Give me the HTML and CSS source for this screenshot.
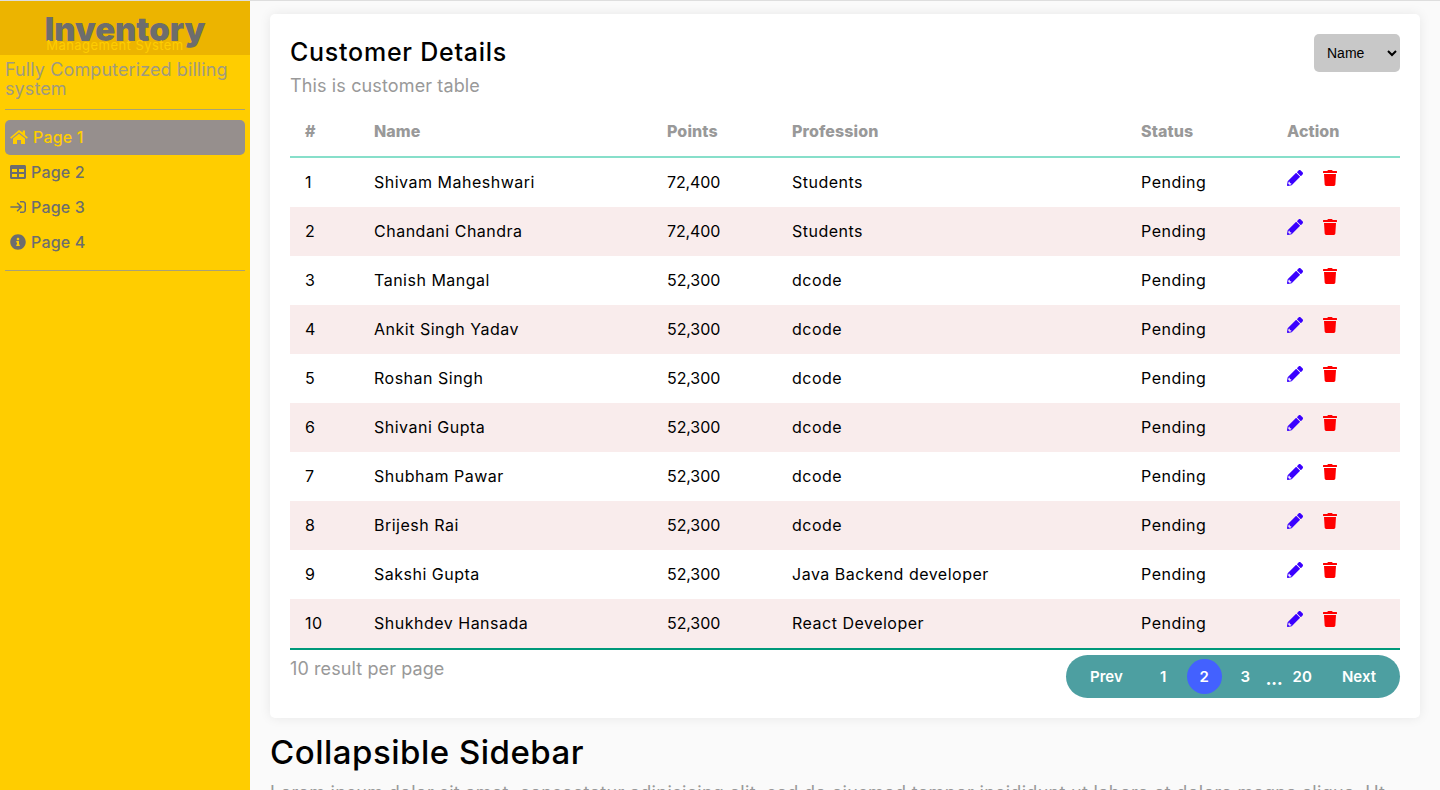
FILE: index.html
```html
<!DOCTYPE html>
<html lang="en">
<head>
    <meta charset="UTF-8">
    <meta name="viewport" content="width=device-width, initial-scale=1.0">
    <title>Inventory Management System</title>
    <link rel="stylesheet" href="styles.css">
</head>
<body>
    <!-- Icon set, used with <use> below -->
    <svg class="icon-defs" aria-hidden="true">
        <symbol id="i-home" viewBox="0 0 576 512"><path d="M288 32L3 270l33 38L288 100l252 208 33-38-93-78V44h-72v68zM96 306L288 148l192 158v174H352V352H224v128H96z"/></symbol>
        <symbol id="i-table" viewBox="0 0 512 512"><path d="M464 32H48C21.49 32 0 53.49 0 80v352c0 26.51 21.49 48 48 48h416c26.51 0 48-21.49 48-48V80c0-26.51-21.49-48-48-48zM224 416H64v-96h160v96zm0-160H64v-96h160v96zm224 160H288v-96h160v96zm0-160H288v-96h160v96z"/></symbol>
        <symbol id="i-signin" viewBox="0 0 512 512"><path d="M416 448h-84c-6.6 0-12-5.4-12-12v-24c0-6.6 5.4-12 12-12h84c26.5 0 48-21.5 48-48V160c0-26.5-21.500-48-48-48h-84c-6.600 0-12-5.400-12-12V76c0-6.600 5.400-12 12-12h84c53 0 96 43 96 96v192c0 53-43 96-96 96zM235 113l-17 17c-4.700 4.700-4.700 12.300 0 17l85 85H24c-6.600 0-12 5.400-12 12v24c0 6.600 5.400 12 12 12h279l-85 85c-4.700 4.700-4.700 12.300 0 17l17 17c4.700 4.700 12.300 4.700 17 0l134-134c4.700-4.700 4.700-12.300 0-17L252 113c-4.700-4.700-12.300-4.700-17 0z"/></symbol>
        <symbol id="i-info" viewBox="0 0 512 512"><path d="M256 8C119.043 8 8 119.083 8 256c0 136.997 111.043 248 248 248s248-111.003 248-248C504 119.083 392.957 8 256 8zm0 110c23.196 0 42 18.804 42 42s-18.804 42-42 42-42-18.804-42-42 18.804-42 42-42zm56 254c0 6.627-5.373 12-12 12h-88c-6.627 0-12-5.373-12-12v-24c0-6.627 5.373-12 12-12h12v-64h-12c-6.627 0-12-5.373-12-12v-24c0-6.627 5.373-12 12-12h64c6.627 0 12 5.373 12 12v100h12c6.627 0 12 5.373 12 12v24z"/></symbol>
        <symbol id="i-pencil" viewBox="0 0 512 512"><path d="M497.9 142.1l-46.1 46.1c-4.7 4.7-12.3 4.7-17 0l-111-111c-4.7-4.7-4.7-12.3 0-17l46.1-46.1c18.7-18.7 49.1-18.7 67.900 0l60.100 60.100c18.800 18.700 18.800 49.100 0 67.900zM284.200 99.800L21.600 362.400.4 483.900c-2.900 16.400 11.400 30.600 27.800 27.800l121.500-21.300 262.600-262.600c4.700-4.700 4.700-12.300 0-17l-111-111c-4.800-4.700-12.400-4.700-17.100 0zM88 424h48v36.300l-64.500 11.300-31.100-31.100L51.700 376H88v48z"/></symbol>
        <symbol id="i-trash" viewBox="0 0 448 512"><path d="M432 32H312l-9.400-18.700A24 24 0 0 0 281.100 0H166.800a23.720 23.720 0 0 0-21.400 13.300L136 32H16A16 16 0 0 0 0 48v32a16 16 0 0 0 16 16h416a16 16 0 0 0 16-16V48a16 16 0 0 0-16-16zM53.200 467a48 48 0 0 0 47.900 45h245.800a48 48 0 0 0 47.900-45L416 128H32z"/></symbol>
    </svg>

    <div class="app">
        <aside class="sidebar">
            <div class="sidebar-header">
                <h3 class="brand">Inventory</h3>
                <div class="brand-sub">Management System</div>
            </div>
            <p class="tagline">Fully Computerized billing system</p>
            <hr class="rule">
            <ul class="menu">
                <li class="menu-item active"><svg class="menu-icon wide"><use href="#i-home"/></svg>Page 1</li>
                <li class="menu-item"><svg class="menu-icon"><use href="#i-table"/></svg>Page 2</li>
                <li class="menu-item"><svg class="menu-icon"><use href="#i-signin"/></svg>Page 3</li>
                <li class="menu-item"><svg class="menu-icon"><use href="#i-info"/></svg>Page 4</li>
            </ul>
            <hr class="rule">
        </aside>

        <main class="content">
            <section class="card">
                <div class="card-head">
                    <div>
                        <h4 class="card-title">Customer Details</h4>
                        <p class="card-sub">This is customer table</p>
                    </div>
                    <select class="sort-select">
                        <option>Name</option>
                    </select>
                </div>

                <table class="customers">
                    <thead>
                        <tr>
                            <th class="col-id">#</th>
                            <th class="col-name">Name</th>
                            <th class="col-points">Points</th>
                            <th class="col-job">Profession</th>
                            <th class="col-status">Status</th>
                            <th class="col-action">Action</th>
                        </tr>
                    </thead>
                    <tbody>
                        <tr><td>1</td><td>Shivam Maheshwari</td><td class="num">72,400</td><td>Students</td><td>Pending</td><td><svg class="act edit"><use href="#i-pencil"/></svg><svg class="act del"><use href="#i-trash"/></svg></td></tr>
                        <tr><td>2</td><td>Chandani Chandra</td><td class="num">72,400</td><td>Students</td><td>Pending</td><td><svg class="act edit"><use href="#i-pencil"/></svg><svg class="act del"><use href="#i-trash"/></svg></td></tr>
                        <tr><td>3</td><td>Tanish Mangal</td><td class="num">52,300</td><td>dcode</td><td>Pending</td><td><svg class="act edit"><use href="#i-pencil"/></svg><svg class="act del"><use href="#i-trash"/></svg></td></tr>
                        <tr><td>4</td><td>Ankit Singh Yadav</td><td class="num">52,300</td><td>dcode</td><td>Pending</td><td><svg class="act edit"><use href="#i-pencil"/></svg><svg class="act del"><use href="#i-trash"/></svg></td></tr>
                        <tr><td>5</td><td>Roshan Singh</td><td class="num">52,300</td><td>dcode</td><td>Pending</td><td><svg class="act edit"><use href="#i-pencil"/></svg><svg class="act del"><use href="#i-trash"/></svg></td></tr>
                        <tr><td>6</td><td>Shivani Gupta</td><td class="num">52,300</td><td>dcode</td><td>Pending</td><td><svg class="act edit"><use href="#i-pencil"/></svg><svg class="act del"><use href="#i-trash"/></svg></td></tr>
                        <tr><td>7</td><td>Shubham Pawar</td><td class="num">52,300</td><td>dcode</td><td>Pending</td><td><svg class="act edit"><use href="#i-pencil"/></svg><svg class="act del"><use href="#i-trash"/></svg></td></tr>
                        <tr><td>8</td><td>Brijesh Rai</td><td class="num">52,300</td><td>dcode</td><td>Pending</td><td><svg class="act edit"><use href="#i-pencil"/></svg><svg class="act del"><use href="#i-trash"/></svg></td></tr>
                        <tr><td>9</td><td>Sakshi Gupta</td><td class="num">52,300</td><td>Java Backend developer</td><td>Pending</td><td><svg class="act edit"><use href="#i-pencil"/></svg><svg class="act del"><use href="#i-trash"/></svg></td></tr>
                        <tr><td>10</td><td>Shukhdev Hansada</td><td class="num">52,300</td><td>React Developer</td><td>Pending</td><td><svg class="act edit"><use href="#i-pencil"/></svg><svg class="act del"><use href="#i-trash"/></svg></td></tr>
                    </tbody>
                </table>

                <div class="card-foot">
                    <span class="per-page">10 result per page</span>
                    <nav class="pager">
                        <a class="pg-text pg-prev">Prev</a>
                        <a class="pg-num">1</a>
                        <a class="pg-num current">2</a>
                        <a class="pg-num">3</a>
                        <span class="pg-dots">...</span>
                        <a class="pg-num">20</a>
                        <a class="pg-text pg-next">Next</a>
                    </nav>
                </div>
            </section>

            <h2 class="page-title">Collapsible Sidebar</h2>
            <p class="lorem">Lorem ipsum dolor sit amet, consectetur adipisicing elit, sed do eiusmod tempor incididunt ut labore et dolore magna aliqua. Ut enim ad minim veniam, quis nostrud exercitation ullamco laboris nisi ut aliquip ex ea commodo consequat.</p>
        </main>
    </div>
</body>
</html>
```

FILE: styles.css
```css
* {
    box-sizing: border-box;
}

html, body {
    height: 100%;
    margin: 0;
    overflow: hidden;
}

body {
    font-family: Inter, "Noto Sans", sans-serif;
    background-color: #fafafa;
    border-top: 1px solid #dedede;
}

.icon-defs {
    display: none;
}

.app {
    display: flex;
    height: 100%;
}

/* Sidebar */
.sidebar {
    flex: 0 0 250px;
    padding-bottom: 20px;
    background-color: #ffcd00;
    color: #6d6d6d;
}

.sidebar-header {
    height: 54px;
    padding-top: 9px;
    background-color: #ecb400;
    text-align: center;
}

.brand {
    margin: 0;
    font-size: 33px;
    line-height: 38px;
    font-weight: 900;
    letter-spacing: -0.1px;
}

.brand-sub {
    margin: -11px 20px 0 0;
    font-size: 13px;
    line-height: 16px;
    letter-spacing: 0.45px;
    color: #ffcd00;
}

.tagline {
    margin: 5px 5px 0;
    font-size: 18px;
    line-height: 19px;
    letter-spacing: 0.1px;
    color: #a09a80;
}

.rule {
    height: 1px;
    margin: 11px 5px 10px;
    border: 0;
    background-color: #a8a178;
}

.menu {
    list-style: none;
    margin: 0 5px;
    padding: 0;
}

.menu + .rule {
    margin-top: 10px;
}

.menu-item {
    display: flex;
    align-items: center;
    height: 35px;
    padding: 0 0 2px 5px;
    font-size: 16px;
    font-weight: 500;
    letter-spacing: 0.2px;
    border-radius: 5px;
}

.menu-item.active {
    background-color: #968f8d;
    color: #ffcd00;
}

.menu-icon {
    width: 16px;
    height: 16px;
    margin-right: 5px;
    fill: currentColor;
}

.menu-icon.wide {
    width: 18px;
    margin-right: 5px;
}

/* Card */
.content {
    flex: 1;
    padding: 13px 20px 0;
}

.card {
    height: 704px;
    padding: 20px;
    background-color: #fff;
    border-radius: 5px;
    box-shadow: 0 0 12px rgba(0, 0, 0, 0.08);
}

.card-head {
    display: flex;
    justify-content: space-between;
    height: 74px;
}

.card-title {
    margin: 0;
    font-size: 25px;
    line-height: 36px;
    font-weight: 500;
    letter-spacing: 0.75px;
}

.card-sub {
    margin: 4px 0 0;
    font-size: 18px;
    line-height: 24px;
    letter-spacing: 0.13px;
    color: #999;
}

.sort-select {
    width: 86px;
    height: 38px;
    padding-left: 9px;
    font-family: "Liberation Sans", sans-serif;
    font-size: 14px;
    background-color: #c8c8c8;
    border: 0;
    border-radius: 5px;
}

/* Table */
.customers {
    width: 100%;
    table-layout: fixed;
    border-collapse: separate;
    border-spacing: 0;
    border-bottom: 2px solid #009879;
}

.customers th {
    height: 50px;
    padding: 0 15px 2px;
    text-align: left;
    font-size: 16px;
    font-weight: 800;
    letter-spacing: 0.1px;
    color: #999;
    border-bottom: 2px solid #87dfca;
}

.customers td {
    height: 49px;
    padding: 0 15px 2px;
    font-size: 16px;
    letter-spacing: 0.5px;
    color: #000;
}

.customers td.num {
    letter-spacing: -0.1px;
}

.customers tbody tr:nth-child(even) {
    background-color: #f9ecec;
}

.col-id { width: 69px; }
.col-name { width: 293px; }
.col-points { width: 125px; }
.col-job { width: 349px; }
.col-status { width: 146px; }
.col-action { width: 128px; }

.act {
    display: inline-block;
    height: 16px;
    margin-bottom: 7px;
    vertical-align: middle;
}

.edit {
    width: 16px;
    margin-right: 20px;
    fill: #3a00ff;
}

.del {
    width: 14px;
    fill: #ff0000;
}

/* Footer */
.card-foot {
    display: flex;
    justify-content: space-between;
    align-items: flex-start;
    padding-top: 5px;
}

.per-page {
    margin-top: 1px;
    font-size: 18px;
    line-height: 26px;
    letter-spacing: 0.1px;
    color: #999;
}

.pager {
    display: flex;
    align-items: center;
    width: 334px;
    height: 43px;
    padding: 0 24px;
    background-color: #4d9fa1;
    border-radius: 22px;
    color: #fff;
    font-size: 15px;
    font-weight: 600;
}

.pg-prev {
    margin-right: 23px;
}

.pg-num {
    display: flex;
    align-items: center;
    justify-content: center;
    width: 35px;
    height: 35px;
    margin-right: 6px;
    border-radius: 50%;
}

.pg-num.current {
    background-color: #4361ff;
}

.pg-dots {
    width: 19px;
    margin: 4px 0 0 -3px;
    font-size: 16px;
    font-weight: 800;
}

.pg-next {
    margin-left: auto;
}

/* Below the card */
.page-title {
    margin: 14px 0 0;
    font-size: 33px;
    line-height: 40px;
    font-weight: 500;
    letter-spacing: 0.5px;
}

.lorem {
    margin: 8px 0 0;
    font-size: 18px;
    line-height: 26px;
    letter-spacing: 0.3px;
    color: #999;
}
```
